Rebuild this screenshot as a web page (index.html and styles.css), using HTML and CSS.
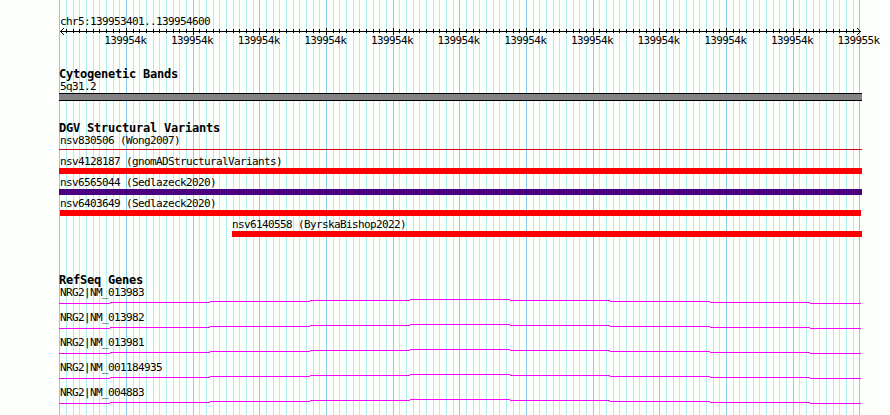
FILE: index.html
```html
<!DOCTYPE html>
<html>

<head>
    <meta charset="utf-8">
    <title>chr5:139953401..139954600</title>
    <link rel="stylesheet" href="styles.css">
</head>

<body>
    <div class="browser">
        <div class="ruler">
            <div class="position">chr5:139953401..139954600</div>
            <svg class="scale" width="803" height="7" shape-rendering="crispEdges">
                <defs>
                    <pattern id="minor" x="0" y="0" width="20" height="7" patternUnits="userSpaceOnUse">
                        <path d="M0 1h1v4h-1zM7 1h1v4h-1zM14 1h1v4h-1z" />
                    </pattern>
                    <pattern id="major" x="0" y="0" width="200" height="7" patternUnits="userSpaceOnUse">
                        <path d="M0 0h1v7h-1zM67 0h1v7h-1zM134 0h1v7h-1z" />
                    </pattern>
                </defs>
                <path d="M1 3h801v1h-801z" />
                <rect x="7" width="792" height="7" fill="url(#minor)" />
                <rect x="7" width="792" height="7" fill="url(#major)" />
                <path d="M1 3h1v1h-1zM2 2h1v3h-1zM3 1h1v1h-1zM3 5h1v1h-1zM4 0h1v1h-1zM4 6h1v1h-1z" />
                <path d="M801 3h1v1h-1zM800 2h1v3h-1zM799 1h1v1h-1zM799 5h1v1h-1zM798 0h1v1h-1zM798 6h1v1h-1z" />
            </svg>
            <div class="labels">
                <span>139954k</span>
                <span>139954k</span>
                <span>139954k</span>
                <span>139954k</span>
                <span>139954k</span>
                <span>139954k</span>
                <span>139954k</span>
                <span>139954k</span>
                <span>139954k</span>
                <span>139954k</span>
                <span>139954k</span>
                <span>139955k</span>
            </div>
        </div>

        <div class="track bands">
            <h2>Cytogenetic Bands</h2>
            <div class="name">5q31.2</div>
            <div class="band"></div>
        </div>

        <div class="track variants">
            <h2>DGV Structural Variants</h2>
            <div class="variant">
                <div class="name">nsv830506 (Wong2007)</div>
                <div class="bar thin"></div>
            </div>
            <div class="variant">
                <div class="name">nsv4128187 (gnomADStructuralVariants)</div>
                <div class="bar"></div>
            </div>
            <div class="variant">
                <div class="name">nsv6565044 (Sedlazeck2020)</div>
                <div class="bar purple"></div>
            </div>
            <div class="variant">
                <div class="name">nsv6403649 (Sedlazeck2020)</div>
                <div class="bar inner"></div>
            </div>
            <div class="variant partial">
                <div class="name">nsv6140558 (ByrskaBishop2022)</div>
                <div class="bar"></div>
            </div>
        </div>

        <svg width="0" height="0" class="symbols">
            <symbol id="intron" viewBox="0 0 802 5">
                <path d="M0 4h51v1h-51zM51 3h100v1h-100zM151 2h100v1h-100zM251 1h100v1h-100zM351 0h100v1h-100zM451 1h100v1h-100zM551 2h100v1h-100zM651 3h100v1h-100zM751 4h51v1h-51z" />
            </symbol>
        </svg>

        <div class="track genes">
            <h2>RefSeq Genes</h2>
            <div class="gene">
                <div class="name">NRG2|NM_013983</div>
                <svg class="intron" width="802" height="5"><use href="#intron" /></svg>
            </div>
            <div class="gene">
                <div class="name">NRG2|NM_013982</div>
                <svg class="intron" width="802" height="5"><use href="#intron" /></svg>
            </div>
            <div class="gene">
                <div class="name">NRG2|NM_013981</div>
                <svg class="intron" width="802" height="5"><use href="#intron" /></svg>
            </div>
            <div class="gene">
                <div class="name">NRG2|NM_001184935</div>
                <svg class="intron" width="802" height="5"><use href="#intron" /></svg>
            </div>
            <div class="gene">
                <div class="name">NRG2|NM_004883</div>
                <svg class="intron" width="802" height="5"><use href="#intron" /></svg>
            </div>
        </div>
    </div>
</body>

</html>
```
FILE: styles.css
```css
body {
    margin: 0;
    height: 415px;
    overflow: hidden;
    background-color: #fdfffc;
    font-family: "DejaVu Sans Mono", monospace;
    font-size: 11px;
    line-height: 13px;
    letter-spacing: -0.62px;
    color: #000;
}

/* 12 major divisions of 10 lines each, the pattern repeats every 200px / 20px */
.browser {
    box-sizing: border-box;
    width: 803px;
    height: 415px;
    margin-left: 59px;
    padding-top: 15px;
    background-image:
        linear-gradient(90deg, #87ceeb 1px, transparent 1px, transparent 67px, #87ceeb 67px, #87ceeb 68px, transparent 68px, transparent 134px, #87ceeb 134px, #87ceeb 135px, transparent 135px),
        linear-gradient(90deg, #afeeee 1px, transparent 1px, transparent 7px, #afeeee 7px, #afeeee 8px, transparent 8px, transparent 14px, #afeeee 14px, #afeeee 15px, transparent 15px);
    background-size: 200px 100%, 20px 100%;
    background-repeat: repeat-x;
}

.position,
.name {
    height: 13px;
    padding-left: 1px;
    white-space: nowrap;
}

.scale {
    display: block;
}

.labels {
    display: flex;
    width: 800px;
    margin-top: -1px;
    padding-left: 33px;
}

.labels span {
    flex: 0 0 66.667px;
    text-align: center;
}

h2 {
    margin: 0;
    height: 12px;
    font-size: 12px;
    line-height: 13px;
    letter-spacing: -0.22px;
    white-space: nowrap;
}

.bands {
    margin-top: 21px;
}

.band {
    box-sizing: border-box;
    height: 8px;
    background-color: #848284;
    border-top: 1px solid #000;
    border-bottom: 1px solid #000;
}

.variants {
    margin-top: 21px;
}

.variant {
    height: 21px;
}

.bar {
    height: 6px;
    background-color: #f00;
}

.thin {
    height: 1px;
    margin-top: 2px;
    background-color: #dc0014;
}

.purple {
    background-color: #4b0082;
}

.inner {
    margin-left: 1px;
    margin-right: 1px;
}

.partial {
    margin-left: 173px;
}

.partial .name {
    padding-left: 0;
}

.symbols {
    display: block;
}

.genes {
    margin-top: 35px;
}

.gene {
    height: 25px;
}

.intron {
    display: block;
    fill: #f0f;
    shape-rendering: crispEdges;
}
```
